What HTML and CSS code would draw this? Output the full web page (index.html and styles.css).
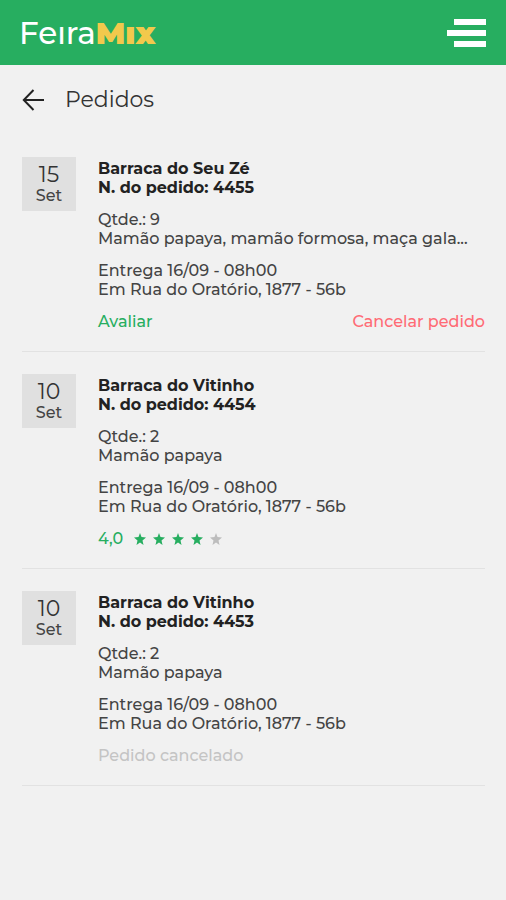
FILE: index.html
```html
<!DOCTYPE html>
<html lang="pt-BR">
	<head>
		<meta charset="UTF-8">
		<meta name="viewport" content="width=device-width, initial-scale=1">
		<title>FeiraMix - Pedidos</title>
		<link rel="stylesheet" href="styles.css">
	</head>

	<body>
		<header class="topbar">
			<a class="logo" href="#">Feıra<b>Mıx</b></a>
			<button class="menu_btn" type="button" aria-label="Menu">
				<svg width="39" height="28" viewBox="0 0 39 28" fill="#fff">
					<rect x="7" y="0" width="32" height="6"/>
					<rect x="0" y="11" width="39" height="6"/>
					<rect x="7" y="22" width="32" height="6"/>
				</svg>
			</button>
		</header>

		<main>
			<div class="page_title">
				<a class="back" href="#" aria-label="Voltar">
					<svg width="22" height="22" viewBox="0 0 22 22" fill="none" stroke="#222" stroke-width="2">
						<path d="M11.500 1 L1.800 11 L11.500 21 M2 11 H22"/>
					</svg>
				</a>
				<h1>Pedidos</h1>
			</div>

			<ul class="orders">
				<li class="order">
					<div class="date"><span class="day">15</span><span>Set</span></div>
					<div class="info">
						<h2>Barraca do Seu Zé<br>N. do pedido: 4455</h2>
						<p>Qtde.: 9<br>Mamão papaya, mamão formosa, maça gala...</p>
						<p>Entrega 16/09 - 08h00<br>Em Rua do Oratório, 1877 - 56b</p>
						<div class="actions">
							<button class="rate" type="button">Avaliar</button>
							<button class="cancel" type="button">Cancelar pedido</button>
						</div>
					</div>
				</li>

				<li class="order">
					<div class="date"><span class="day">10</span><span>Set</span></div>
					<div class="info">
						<h2>Barraca do Vitinho<br>N. do pedido: 4454</h2>
						<p>Qtde.: 2<br>Mamão papaya</p>
						<p>Entrega 16/09 - 08h00<br>Em Rua do Oratório, 1877 - 56b</p>
						<div class="rating">
							<span>4,0</span>
							<div class="stars">
								<svg class="star" viewBox="0 0 24 24"><path d="M12 0l3 8 9 1-7 6 2 9-7-5-7 5 2-9-7-6 9-1z"/></svg>
								<svg class="star" viewBox="0 0 24 24"><path d="M12 0l3 8 9 1-7 6 2 9-7-5-7 5 2-9-7-6 9-1z"/></svg>
								<svg class="star" viewBox="0 0 24 24"><path d="M12 0l3 8 9 1-7 6 2 9-7-5-7 5 2-9-7-6 9-1z"/></svg>
								<svg class="star" viewBox="0 0 24 24"><path d="M12 0l3 8 9 1-7 6 2 9-7-5-7 5 2-9-7-6 9-1z"/></svg>
								<svg class="star off" viewBox="0 0 24 24"><path d="M12 0l3 8 9 1-7 6 2 9-7-5-7 5 2-9-7-6 9-1z"/></svg>
							</div>
						</div>
					</div>
				</li>

				<li class="order">
					<div class="date"><span class="day">10</span><span>Set</span></div>
					<div class="info">
						<h2>Barraca do Vitinho<br>N. do pedido: 4453</h2>
						<p>Qtde.: 2<br>Mamão papaya</p>
						<p>Entrega 16/09 - 08h00<br>Em Rua do Oratório, 1877 - 56b</p>
						<p class="canceled">Pedido cancelado</p>
					</div>
				</li>
			</ul>
		</main>
	</body>
</html>
```
FILE: styles.css
```css
*{
	margin: 0;
	padding: 0;
	box-sizing: border-box;
	list-style: none;
}

body {
	background-color: #f1f1f1;
	color: #444;
	font-family: Montserrat, Inter, sans-serif;
	font-size: 16px;
	font-weight: 500;
	line-height: 19px;
}

a {
	color: inherit;
	text-decoration: none;
}

button {
	border: 0;
	background: none;
	font: inherit;
	cursor: pointer;
}

svg {
	display: block;
}

.topbar {
	display: flex;
	align-items: center;
	justify-content: space-between;
	height: 65px;
	padding: 0 20px 0 19px;
	background-color: #27ae60;
}

.logo {
	color: #fff;
	font-size: 31px;
	line-height: 40px;
}

.logo b {
	color: #f2c94c;
	font-weight: 900;
}

main {
	padding: 20px 21px 20px 22px;
}

.page_title {
	display: flex;
	align-items: center;
	gap: 21px;
	height: 30px;
}

.page_title h1 {
	color: #333;
	font-size: 22px;
	font-weight: 400;
	line-height: 30px;
}

.orders {
	padding-top: 20px;
}

.order {
	display: flex;
	align-items: flex-start;
	gap: 22px;
	padding: 22px 0 20px;
	border-bottom: 1px solid #e2e2e2;
}

.date {
	display: flex;
	flex-direction: column;
	flex-shrink: 0;
	align-items: center;
	justify-content: center;
	width: 54px;
	height: 54px;
	padding-top: 1px;
	background-color: #e0e0e0;
}

.day {
	color: #333;
	font-size: 22px;
	font-weight: 400;
	line-height: 22px;
}

.info {
	display: flex;
	flex: 1;
	flex-direction: column;
	gap: 13px;
	min-width: 0;
	padding-top: 2px;
}

.info h2 {
	color: #222;
	font-size: 16px;
	font-weight: 700;
}

.actions {
	display: flex;
	justify-content: space-between;
}

.rate, .rating {
	color: #27ae60;
}

.cancel {
	color: #ff6b75;
}

.rating {
	display: flex;
	align-items: center;
	gap: 11px;
}

.stars {
	display: flex;
	gap: 7px;
}

.star {
	width: 12px;
	height: 12px;
	fill: #27ae60;
}

.star.off {
	fill: #bdbdbd;
}

.info .canceled {
	color: #c4c4c4;
}
```
